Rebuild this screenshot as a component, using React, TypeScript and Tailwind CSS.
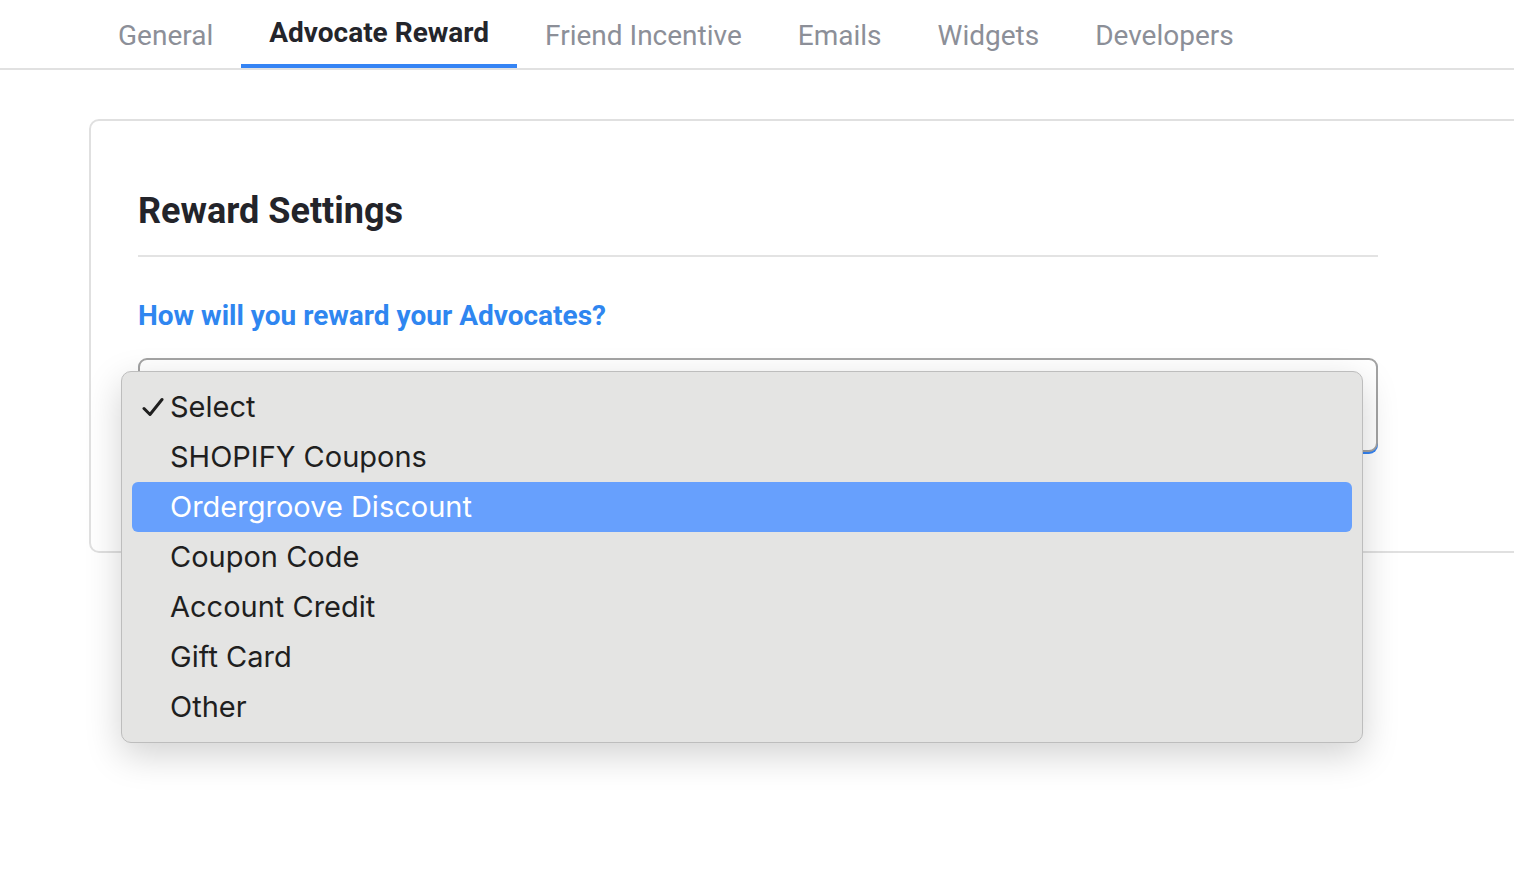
import React from "react";

const tabs = ["General", "Advocate Reward", "Friend Incentive", "Emails", "Widgets", "Developers"];
const options = [
  "Select",
  "SHOPIFY Coupons",
  "Ordergroove Discount",
  "Coupon Code",
  "Account Credit",
  "Gift Card",
  "Other",
];

export default function App() {
  const active = "Advocate Reward";
  const selected = "Select";
  const hovered = "Ordergroove Discount";

  return (
    <div className="relative w-[1514px] h-[894px] overflow-hidden bg-white" style={{ fontFamily: "Roboto, 'Liberation Sans', sans-serif" }}>
      {/* Top tab bar */}
      <nav className="flex h-[70px] border-b-2 border-[#e1e1e1] pl-[90px]">
        {tabs.map((t) => (
          <div
            key={t}
            className={
              t === active
                ? "flex h-[68px] items-center border-b-4 border-[#3584f4] px-[28px] pt-[2px] text-[28px] font-bold text-[#24252b]"
                : "flex h-[68px] items-center px-[28px] pt-[4px] text-[28px] text-[#8c8f98]"
            }
          >
            {t}
          </div>
        ))}
      </nav>

      {/* Settings card */}
      <section className="ml-[89px] mt-[49px] w-[1500px] rounded-tl-[10px] rounded-bl-[10px] border-2 border-[#e0e0e0] pl-[47px] pt-[69px] pb-[99px]">
        <div className="w-[1240px]">
          <h2 className="text-[36px] leading-[42px] font-bold text-[#23242a]">Reward Settings</h2>
          <div className="mt-[23px] h-[2px] bg-[#e3e3e3]" />
          <p className="mt-[42px] text-[28px] leading-[34px] font-bold text-[#2f86f0]">
            How will you reward your Advocates?
          </p>
          <div className="mt-[25px] h-[94px] rounded-[9px] border-2 border-[#a3a3a3] bg-white shadow-[0_2px_0_#3584f4]" />
        </div>
      </section>

      {/* Open select menu */}
      <div
        className="absolute left-[121px] top-[371px] w-[1242px] rounded-[10px] border border-[#bdbdbd] bg-[#e4e4e3] px-[10px] py-[10px] shadow-[0_12px_36px_rgba(0,0,0,0.18)]"
        style={{ fontFamily: "Inter, 'Noto Sans', sans-serif" }}
      >
        {options.map((o) => (
          <div
            key={o}
            className={
              o === hovered
                ? "relative flex h-[50px] items-center rounded-[6px] bg-[#67a0fd] pl-[38px] text-[29px] text-white"
                : "relative flex h-[50px] items-center pl-[38px] text-[29px] text-[#1f1f1f]"
            }
          >
            {o === selected && (
              <svg className="absolute left-[10px] top-[15px]" width="22" height="20" viewBox="0 0 22 20" fill="none">
                <path d="M2 11.5 L8 17.5 L20 2.5" stroke="#1f1f1f" strokeWidth="3" strokeLinecap="round" strokeLinejoin="round" />
              </svg>
            )}
            {o}
          </div>
        ))}
      </div>
    </div>
  );
}
